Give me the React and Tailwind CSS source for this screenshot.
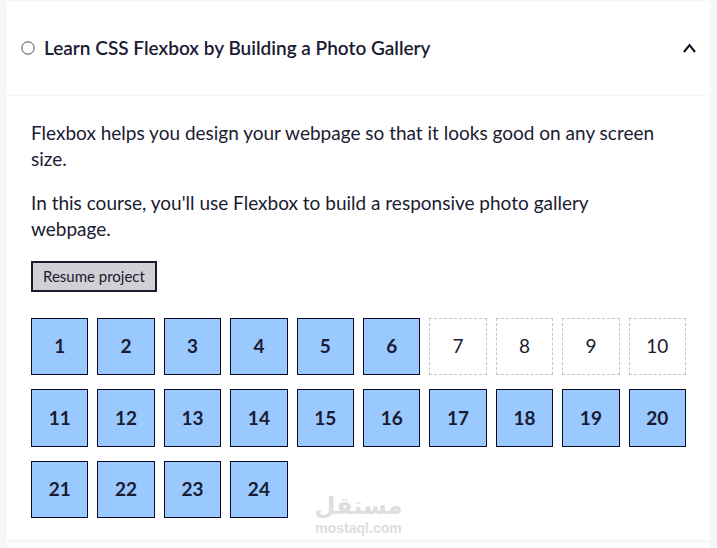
import { useState } from 'react'
import clsx from 'clsx'

const TOTAL_STEPS = 24
const pendingSteps = [7, 8, 9, 10]

const steps = Array.from({ length: TOTAL_STEPS }, (_, i) => ({
  number: i + 1,
  completed: !pendingSteps.includes(i + 1),
}))

function StepLink({ number, completed }) {
  return (
    <a
      href={`#step-${number}`}
      aria-label={`Step ${number}${completed ? ' completed' : ''}`}
      className={clsx(
        'flex aspect-square items-center justify-center border text-[19px]',
        completed ? 'border-[#0a0a23] bg-[#99c9ff] font-bold' : 'border-dashed border-[#c4c4c8]'
      )}
    >
      {number}
    </a>
  )
}

function Watermark() {
  return (
    <div className="absolute bottom-1 left-1/2 flex -translate-x-1/2 flex-col items-center font-bold text-[#dedede]">
      <span lang="ar" dir="rtl" className="font-['DejaVu_Sans',sans-serif] text-2xl leading-7">مستقل</span>
      <span className="font-['Liberation_Sans',sans-serif] text-sm leading-4">mostaql.com</span>
    </div>
  )
}

export default function App() {
  const [open, setOpen] = useState(true)

  return (
    <div className="min-h-screen bg-[#f5f6f7] px-[7px] pt-px font-['Lato',sans-serif] text-[#1b1b32]">
      <section className="relative bg-white">
        <h3>
          <button
            type="button"
            aria-expanded={open}
            onClick={() => setOpen(!open)}
            className="flex w-full items-center border-b border-[#f5f6f7] px-3.5 py-[33px] text-left text-[19px] leading-7 font-semibold"
          >
            <svg className="mr-[9px] size-[14px] shrink-0" viewBox="0 0 14 14" fill="none" aria-hidden="true">
              <circle cx="7" cy="7" r="6.2" stroke="#1b1b32" strokeWidth="0.8" />
            </svg>
            <span className="grow">Learn CSS Flexbox by Building a Photo Gallery</span>
            <svg className="size-[14px] shrink-0" viewBox="0 0 14 14" fill="none" aria-hidden="true">
              <path d="M2 11 L7.5 4.2 L13 11" stroke="#0a0a23" strokeWidth="2" />
            </svg>
          </button>
        </h3>

        {open && (
          <div className="px-6 pt-6 pb-[22px]">
            <div className="space-y-[18px] pr-5 text-[19px] leading-[26px]">
              <p>Flexbox helps you design your webpage so that it looks good on any screen size.</p>
              <p>In this course, you'll use Flexbox to build a responsive photo gallery webpage.</p>
            </div>

            <button
              type="button"
              className="mt-[19px] block border-2 border-[#1b1b32] bg-[#d0d0d5] px-2.5 py-0.5 text-[15px] leading-[23px]"
            >
              Resume project
            </button>

            <nav aria-label="Steps" className="mt-[26px] grid grid-cols-10 gap-x-[9px] gap-y-3.5">
              {steps.map((step) => (
                <StepLink key={step.number} {...step} />
              ))}
            </nav>
          </div>
        )}

        <Watermark />
      </section>

      <div className="mt-[3px] h-2 bg-white" />
    </div>
  )
}
